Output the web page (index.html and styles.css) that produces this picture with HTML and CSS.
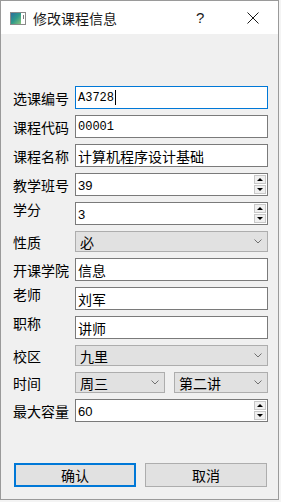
FILE: index.html
```html
<!DOCTYPE html>
<html lang="zh-CN">
<head>
<meta charset="utf-8">
<title>修改课程信息</title>
<link rel="stylesheet" href="styles.css">
</head>
<body>
<div class="window">
  <div class="titlebar">
    <svg class="app-icon" width="16" height="13" viewBox="0 0 16 13">
      <defs>
        <linearGradient id="g" x1="0" y1="0" x2="1" y2="1">
          <stop offset="0" stop-color="#2a6f9e"/>
          <stop offset="0.5" stop-color="#2f9a8a"/>
          <stop offset="1" stop-color="#8cc47a"/>
        </linearGradient>
      </defs>
      <rect x="0.5" y="0.5" width="15" height="12" fill="#ffffff" stroke="#8a8a8a"/>
      <rect x="1" y="1" width="10" height="11" fill="url(#g)"/>
      <rect x="13" y="3" width="1" height="4" fill="#7a7a7a"/>
    </svg>
    <span class="title">修改课程信息</span>
    <span class="help">?</span>
    <svg class="close" width="12" height="12" viewBox="0 0 12 12">
      <path d="M0.5 0.5 L11.5 11.5 M11.5 0.5 L0.5 11.5" stroke="#1a1a1a" stroke-width="1" fill="none"/>
    </svg>
  </div>
  <div class="body">
    <div class="form">
      <span class="lbl">选课编号</span>
      <div class="edit focus"><span class="mono">A3728</span><span class="caret"></span></div>

      <span class="lbl">课程代码</span>
      <div class="edit"><span class="mono">00001</span></div>

      <span class="lbl">课程名称</span>
      <div class="edit"><span>计算机程序设计基础</span></div>

      <span class="lbl">教学班号</span>
      <div class="edit spin"><span class="num">39</span>
        <div class="spinbtns"><span class="sb"><i class="up"></i></span><span class="sb"><i class="down"></i></span></div>
      </div>

      <span class="lbl top">学分</span>
      <div class="edit spin"><span class="num">3</span>
        <div class="spinbtns"><span class="sb"><i class="up"></i></span><span class="sb"><i class="down"></i></span></div>
      </div>

      <span class="lbl">性质</span>
      <div class="combo"><span>必</span>
        <svg class="chev" width="8" height="5" viewBox="0 0 8 5"><path d="M0.5 0.5 L4 4 L7.5 0.5" stroke="#707070" fill="none"/></svg>
      </div>

      <span class="lbl">开课学院</span>
      <div class="edit"><span>信息</span></div>

      <span class="lbl top">老师</span>
      <div class="edit"><span>刘军</span></div>

      <span class="lbl top">职称</span>
      <div class="edit"><span>讲师</span></div>

      <span class="lbl">校区</span>
      <div class="combo"><span>九里</span>
        <svg class="chev" width="8" height="5" viewBox="0 0 8 5"><path d="M0.5 0.5 L4 4 L7.5 0.5" stroke="#707070" fill="none"/></svg>
      </div>

      <span class="lbl">时间</span>
      <div class="pair">
        <div class="combo"><span>周三</span>
          <svg class="chev" width="8" height="5" viewBox="0 0 8 5"><path d="M0.5 0.5 L4 4 L7.5 0.5" stroke="#707070" fill="none"/></svg>
        </div>
        <div class="combo"><span>第二讲</span>
          <svg class="chev" width="8" height="5" viewBox="0 0 8 5"><path d="M0.5 0.5 L4 4 L7.5 0.5" stroke="#707070" fill="none"/></svg>
        </div>
      </div>

      <span class="lbl">最大容量</span>
      <div class="edit spin"><span class="num">60</span>
        <div class="spinbtns"><span class="sb"><i class="up"></i></span><span class="sb"><i class="down"></i></span></div>
      </div>
    </div>
    <div class="buttons">
      <button class="btn default">确认</button>
      <button class="btn">取消</button>
    </div>
  </div>
</div>
</body>
</html>
```
FILE: styles.css
```css
html, body {
  margin: 0;
  padding: 0;
  background: #f4f4f4;
}
body {
  width: 281px;
  height: 502px;
  overflow: hidden;
  font-family: "Noto Sans CJK SC", "Noto Sans", sans-serif;
  font-size: 14px;
  color: #000;
}
.window {
  box-sizing: border-box;
  width: 279px;
  height: 500px;
  border: 1px solid #9a9a9a;
  display: flex;
  flex-direction: column;
  background: #f0f0f0;
}
.titlebar {
  height: 33px;
  background: #ffffff;
  display: flex;
  align-items: center;
  flex: none;
}
.app-icon {
  margin-left: 9px;
  margin-top: 1px;
}
.title {
  margin-left: 7px;
  color: #1a1a1a;
  font-size: 14px;
  line-height: 20px;
}
.help {
  margin-left: auto;
  margin-right: 0;
  font-family: "Liberation Sans", sans-serif;
  font-size: 15px;
  color: #1a1a1a;
  width: 6px;
  margin-right: 45px;
}
.close {
  margin-right: 19px;
}
.body {
  flex: 1;
  display: flex;
  flex-direction: column;
  padding: 52px 9px 0 12px;
}
.form {
  display: grid;
  grid-template-columns: 62px 193px;
  row-gap: 6px;
  align-items: center;
}
.lbl {
  line-height: 20px;
  white-space: nowrap;
}
.lbl.top {
  align-self: start;
  line-height: 14px;
  margin-top: 0px;
}
.edit {
  box-sizing: border-box;
  height: 23px;
  background: #ffffff;
  border: 1px solid #7a7a7a;
  display: flex;
  align-items: center;
  padding-left: 2px;
  position: relative;
}
.edit.focus {
  border-color: #0078d7;
}
.mono {
  font-family: "Liberation Mono", monospace;
  font-size: 12px;
}
.num {
  font-family: "Liberation Sans", sans-serif;
  font-size: 13px;
  padding-top: 2px;
}
.caret {
  display: inline-block;
  width: 1px;
  height: 15px;
  background: #000;
  margin-left: 1px;
}
.spinbtns {
  margin-left: auto;
  margin-right: 1px;
  display: flex;
  flex-direction: column;
  gap: 1px;
}
.sb {
  box-sizing: border-box;
  width: 12px;
  height: 9px;
  background: #f0f0f0;
  border: 1px solid #c8c8c8;
  display: flex;
  align-items: center;
  justify-content: center;
}
.sb i {
  display: block;
  width: 0;
  height: 0;
  border-left: 3px solid transparent;
  border-right: 3px solid transparent;
}
.sb i.up {
  border-bottom: 3px solid #000;
}
.sb i.down {
  border-top: 3px solid #000;
}
.combo {
  box-sizing: border-box;
  height: 21px;
  background: #e1e1e1;
  border: 1px solid #adadad;
  display: flex;
  align-items: center;
  padding-left: 4px;
  padding-right: 5px;
}
.chev {
  margin-left: auto;
}
.pair {
  display: grid;
  grid-template-columns: 90px 94px;
  column-gap: 9px;
}
.buttons {
  margin-top: auto;
  margin-bottom: 12px;
  display: flex;
  gap: 9px;
  padding-left: 1px;
}
.btn {
  box-sizing: border-box;
  width: 122px;
  height: 24px;
  background: #e1e1e1;
  border: 1px solid #adadad;
  font-family: "Noto Sans CJK SC", sans-serif;
  font-size: 14px;
  color: #000;
  padding: 0;
  line-height: 20px;
}
.btn.default {
  border: 2px solid #0078d7;
}
```
